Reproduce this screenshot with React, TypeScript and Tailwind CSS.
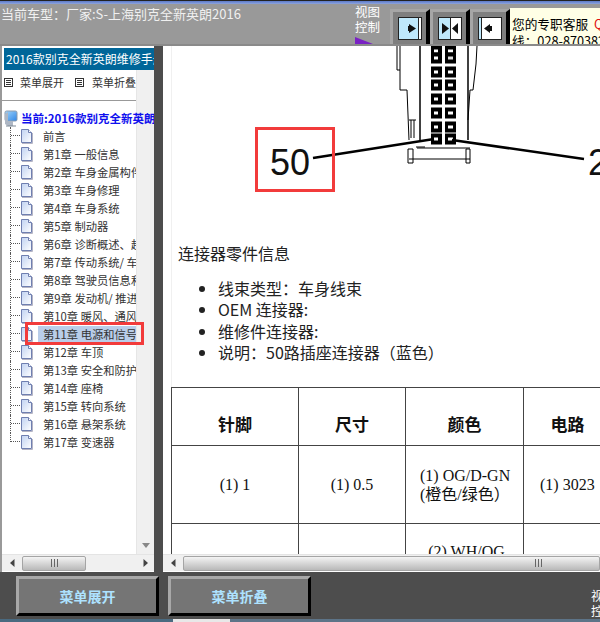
import React from "react";

const chapters = [
  "前言", "第1章 一般信息", "第2章 车身金属构件", "第3章 车身修理", "第4章 车身系统", "第5章 制动器",
  "第6章 诊断概述、超级", "第7章 传动系统/ 车桥", "第8章 驾驶员信息和娱乐", "第9章 发动机/ 推进系统",
  "第10章 暖风、通风", "第11章 电源和信号", "第12章 车顶", "第13章 安全和防护", "第14章 座椅",
  "第15章 转向系统", "第16章 悬架系统", "第17章 变速器",
];

const cjk = "font-['Noto_Sans_CJK_SC','Liberation_Sans',sans-serif]";

function DocIcon() {
  return (
    <svg width="13" height="15" viewBox="0 0 13 15" className="shrink-0">
      <defs>
        <linearGradient id="doc" x1="0" y1="0" x2="1" y2="1">
          <stop offset="0" stopColor="#c0d2f2" />
          <stop offset="1" stopColor="#ffffff" />
        </linearGradient>
      </defs>
      <path d="M1.500 .5H8.500L11.500 3.500V13.500H1.500Z" fill="url(#doc)" stroke="#6f7fb0" />
      <path d="M8.500 .5V3.500H11.500" fill="#fff" stroke="#6f7fb0" />
      <path d="M2 14.500H12.500V4" fill="none" stroke="#b5b5c5" />
    </svg>
  );
}

function MenuIcon() {
  return (
    <svg width="9" height="9" viewBox="0 0 9 9" className="shrink-0">
      <rect x=".5" y=".5" width="8" height="8" fill="#fff" stroke="#333" />
      <path d="M2 2.500H7M2 4.500H7M2 6.500H7" stroke="#333" />
    </svg>
  );
}

function ViewButton({ mode }: { mode: "right" | "both" | "left" }) {
  return (
    <div className="w-[40px] h-[35px] bg-[#a6a6a6] pl-[3px] pt-[3px] flex">
      <div className="w-[33px] h-[32px] bg-[#7f7f7f] flex items-center justify-center">
        <svg width="24" height="23" viewBox="0 0 24 23">
          <rect x=".5" y=".5" width="23" height="22" fill={mode === "left" ? "#fff" : "#bfe8fb"} stroke="#222" />
          {mode === "right" && (
            <>
              <rect x="21" y="1" width="2" height="21" fill="#fff" />
              <path d="M20.500 1V22" stroke="#222" />
              <path d="M11 7L18 11.500L11 16Z" fill="#111" />
              <rect x="10" y="9" width="3" height="5" fill="#111" />
            </>
          )}
          {mode === "both" && (
            <>
              <rect x="12" y="1" width="11" height="21" fill="#fff" />
              <path d="M4 6L11 11.500L4 17Z" fill="#111" />
              <path d="M20 6L14 11.500L20 17Z" fill="#111" />
              <path d="M12.500 1V22" stroke="#222" />
            </>
          )}
          {mode === "left" && (
            <>
              <rect x="1" y="1" width="2" height="21" fill="#bfe8fb" />
              <path d="M3.500 1V22" stroke="#222" />
              <path d="M12 7L6 11.500L12 16Z" fill="#111" />
              <rect x="11" y="9" width="3" height="5" fill="#111" />
            </>
          )}
        </svg>
      </div>
      <div className="w-[4px] mt-[-3px] h-[35px] bg-black [clip-path:polygon(0_3px,100%_0,100%_100%,0_100%)]" />
    </div>
  );
}

function Grip() {
  return (
    <svg width="9" height="8" viewBox="0 0 9 8">
      <path d="M1.500 0V8M4.500 0V8M7.500 0V8" stroke="#666" />
    </svg>
  );
}

function Diagram() {
  const rows = [51, 58, 72, 85, 99, 113, 127, 139];
  return (
    <svg width="437" height="157" viewBox="163 46 437 157" className="block">
      <g stroke="#000" fill="none" strokeWidth="1">
        <path d="M397 46V70H400M400 46V90H407L409 140" />
        <path d="M420 46V140" strokeWidth="1.500" />
        <path d="M468 46V140" strokeWidth="1.500" />
        <path d="M477 46L476 64L473 90H470L468 120" />
        <path d="M409 120H416M411 120V138M414 120V138" />
        <path d="M408 149H413V163H408ZM409 159H470M417 148H470M416 147H425M466 149H470V163H466Z" />
      </g>
      {rows.map((y, i) => (
        <g key={y}>
          <rect x="431" y={y - 5.5} width="11" height="11" fill="#000" />
          <rect x="445" y={y - 5.5} width="11" height="11" fill="#000" />
          <rect x="434" y={y - 1.5} width="4" height="3" fill="#fff" />
          <rect x="448" y={y - 1.5} width="5" height="3" fill={i === 1 ? "#ddd" : "#fff"} />
        </g>
      ))}
      <path d="M313 158L434 139" stroke="#000" strokeWidth="2.600" />
      <path d="M452 140L584 159" stroke="#000" strokeWidth="2.600" />
      <text x="270" y="175" fontFamily="Liberation Sans" fontSize="36" fill="#111">50</text>
      <text x="588" y="175" fontFamily="Liberation Sans" fontSize="36" fill="#111">2</text>
    </svg>
  );
}

function HScroll({ thumb, grip, right }: { thumb: string; grip: string; right?: boolean }) {
  return (
    <div className="h-[17px] bg-[#f0f0f0] flex items-center shrink-0 border-t border-[#e4e4e4]">
      <div className="w-[20px] flex justify-center shrink-0">
        <svg width="5" height="8" viewBox="0 0 5 8"><path d="M4.500 0V8L0 4Z" fill="#444" /></svg>
      </div>
      <div className={`${thumb} h-[15px] rounded-[2px] border border-[#a5a5a5] bg-gradient-to-b from-[#f4f4f4] to-[#b9b9b9] flex items-center shrink-0 ${grip}`}>
        <Grip />
      </div>
      {right && (
        <div className="ml-auto w-[18px] flex justify-center">
          <svg width="5" height="8" viewBox="0 0 5 8"><path d="M.5 0V8L5 4Z" fill="#444" /></svg>
        </div>
      )}
    </div>
  );
}

export default function App() {
  return (
    <div className={`relative w-[600px] h-[622px] overflow-hidden bg-[#4d4d4d] flex flex-col ${cjk}`}>
      {/* top bar */}
      <div className="h-[44px] shrink-0 bg-[#999999] flex flex-col">
        <div className="h-[1px] bg-[#222]" />
        <div className="h-[3px] bg-gradient-to-b from-[#5a78c8] to-[#8fa5dc]" />
        <div className="flex-1 flex items-start relative">
          <div className="pl-[1px] pt-[1px] text-[13px] leading-[18px] text-[#f0f0f0] whitespace-nowrap w-[355px]">
            当前车型：厂家:S-上海别克全新英朗2016
          </div>
          <div className="w-[35px] shrink-0 flex flex-col text-white text-[12.500px] leading-[15px]">
            <span>视图</span>
            <span>控制</span>
            <svg width="18" height="7" viewBox="0 0 18 7" className="mt-[3px]">
              <path d="M0 0L18 7H0Z" fill="#7a22c4" />
            </svg>
          </div>
          <div className="flex mt-[5px]">
            <ViewButton mode="right" />
            <ViewButton mode="both" />
            <ViewButton mode="left" />
          </div>
          <div className="mt-[4px] flex-1 h-[36px] bg-[#ffffe6] pl-[2px] pt-[7px] overflow-hidden whitespace-nowrap text-[12.700px] leading-[17px] text-black">
            <div>您的专职客服 <span className="ml-[3px] text-[#e01010]">QQ</span></div>
            <div>线：028-87038200</div>
          </div>
        </div>
      </div>

      {/* panes */}
      <div className="h-[528px] shrink-0 flex border-t-[2px] border-[#8a8a8a]">
        <div className="w-[154px] shrink-0 flex flex-col bg-white border-l-[2px] border-[#999]">
          <div className="mt-[2px] ml-[2px] h-[22px] bg-[#006699] text-white text-[12px] leading-[22px] pl-[2px] whitespace-nowrap shrink-0 overflow-hidden">
            2016款别克全新英朗维修手册
          </div>
          <div className="flex-1 flex min-h-0">
            <div className="w-[134px] shrink-0 flex flex-col">
              <div className="flex items-center h-[31px] border-b border-[#999] shrink-0 pl-[2px] pb-[6px] text-[11px] text-[#333] whitespace-nowrap">
                <MenuIcon />
                <span className="ml-[7px] w-[58px]">菜单展开</span>
                <MenuIcon />
                <span className="ml-[8px]">菜单折叠</span>
              </div>
              <div className="flex items-center h-[17px] w-[152px] mt-[9px] pl-[2px] whitespace-nowrap shrink-0 overflow-hidden relative z-10">
                <svg width="14" height="17" viewBox="0 0 14 17" className="shrink-0">
                  <defs>
                    <linearGradient id="pc" x1="0" y1="0" x2="1" y2="1">
                      <stop offset="0" stopColor="#9fd4fb" />
                      <stop offset="1" stopColor="#2f86e6" />
                    </linearGradient>
                  </defs>
                  <rect x="1" y="1" width="12" height="10" rx="1.500" fill="url(#pc)" stroke="#8e9bab" />
                  <path d="M1 4V14L4 16H9V11H4V2Z" fill="#aeb7c4" />
                  <path d="M2 16H12" stroke="#7b8794" />
                </svg>
                <span className="ml-[3px] text-[11.500px] font-bold text-[#1010ee]">当前:2016款别克全新英朗</span>
              </div>
              <ul className="ml-[8px] shrink-0">
                {chapters.map((c, i) => {
                  const last = i === chapters.length - 1;
                  const selected = c.startsWith("第11章");
                  return (
                    <li key={c} className="flex h-[18px] items-center whitespace-nowrap overflow-hidden">
                      <div className={`w-[10px] h-full shrink-0 ${last ? "" : "border-l border-dotted border-[#555]"}`}>
                        <div className={`h-[9px] border-b border-dotted border-[#555] ${last ? "border-l" : ""}`} />
                      </div>
                      <DocIcon />
                      <span className={`ml-[5px] pl-[5px] flex-1 h-[16px] text-[11.300px] leading-[16px] text-[#333] ${selected ? "bg-[#b9cde9]" : ""}`}>{c}</span>
                    </li>
                  );
                })}
              </ul>
            </div>
            <div className="w-[18px] shrink-0 bg-[#f0f0f0] flex flex-col justify-end items-center pb-[6px] border-l border-[#e6e6e6]">
              <svg width="8" height="5" viewBox="0 0 8 5"><path d="M0 0H8L4 5Z" fill="#888" /></svg>
            </div>
          </div>
          <HScroll thumb="w-[64px]" grip="justify-center" right />
          <div className="h-[1px] bg-white" />
        </div>

        <div className="w-[9px] shrink-0" />

        <div className="flex-1 min-w-0 flex flex-col bg-white">
          <div className="flex-1 min-h-0 overflow-hidden">
            <div className="ml-[8px] border-l border-[#f0f0f0] w-[430px] h-full">
              <div className="ml-[-9px]"><Diagram /></div>
              <p className="mt-[39px] ml-[6px] text-[16px] leading-[22px] text-[#222]">连接器零件信息</p>
              <ul className="mt-[14px] ml-[46px] text-[16px] leading-[21.300px] text-[#222] list-disc list-outside whitespace-nowrap">
                <li>线束类型：车身线束</li>
                <li>OEM 连接器:</li>
                <li>维修件连接器:</li>
                <li>说明：50路插座连接器（蓝色）</li>
              </ul>
              <table className="mt-[24px] ml-[-1px] border-collapse table-fixed w-[520px] text-[#111] text-center font-['Liberation_Serif','Noto_Sans_CJK_SC',serif] text-[16px] leading-[19px]">
                <colgroup>
                  <col className="w-[127px]" />
                  <col className="w-[107px]" />
                  <col className="w-[118px]" />
                  <col className="w-[168px]" />
                </colgroup>
                <tbody>
                  <tr className="h-[58px] text-[17px] font-bold">
                    <td className="border border-[#444] pt-[18px]">针脚</td>
                    <td className="border border-[#444] pt-[18px]">尺寸</td>
                    <td className="border border-[#444] pt-[18px]">颜色</td>
                    <td className="border border-[#444] pt-[18px] pr-[80px]">电路</td>
                  </tr>
                  <tr className="h-[78px]">
                    <td className="border border-[#444]">(1) 1</td>
                    <td className="border border-[#444]">(1) 0.5</td>
                    <td className="border border-[#444] text-left pl-[14px]">(1) OG/D-GN<br />(橙色/绿色）</td>
                    <td className="border border-[#444] text-left pl-[16px]">(1) 3023</td>
                  </tr>
                  <tr className="h-[60px]">
                    <td className="border border-[#444]" />
                    <td className="border border-[#444]" />
                    <td className="border border-[#444] align-top pt-[18px] pl-[4px]">(2) WH/OG</td>
                    <td className="border border-[#444]" />
                  </tr>
                </tbody>
              </table>
            </div>
          </div>
          <HScroll thumb="flex-1" grip="justify-end pr-[56px]" />
          <div className="h-[1px] bg-white" />
        </div>
      </div>

      {/* bottom bar */}
      <div className="flex-1 flex items-start pt-[4px] gap-[9px] pl-[16px] relative">
        <button className="w-[143px] h-[40px] bg-[#757575] border-[3px] border-t-[#a8a8a8] border-l-[#a8a8a8] border-r-black border-b-black text-[#aee2ff] text-[14px] font-bold">
          菜单展开
        </button>
        <button className="w-[143px] h-[40px] bg-[#757575] border-[3px] border-t-[#a8a8a8] border-l-[#a8a8a8] border-r-black border-b-black text-[#aee2ff] text-[14px] font-bold">
          菜单折叠
        </button>
        <div className="ml-auto w-[9px] overflow-hidden mt-[12px] text-white text-[12.500px] leading-[15px] whitespace-nowrap">
          <div>视图</div>
          <div>控制</div>
        </div>
      </div>
      <div className="h-[3px] shrink-0 flex">
        <div className="w-[173px] bg-[#4a6a80]" />
        <div className="w-[57px] bg-[#e8e8e8]" />
        <div className="flex-1 bg-[#5d7488]" />
      </div>

      {/* annotation overlays */}
      <div className="absolute left-[25px] top-[322px] w-[119px] h-[23px] border-[3px] border-[#f23b3b]" />
      <div className="absolute left-[255px] top-[127px] w-[80px] h-[65px] border-[3px] border-[#f23b3b]" />
    </div>
  );
}
